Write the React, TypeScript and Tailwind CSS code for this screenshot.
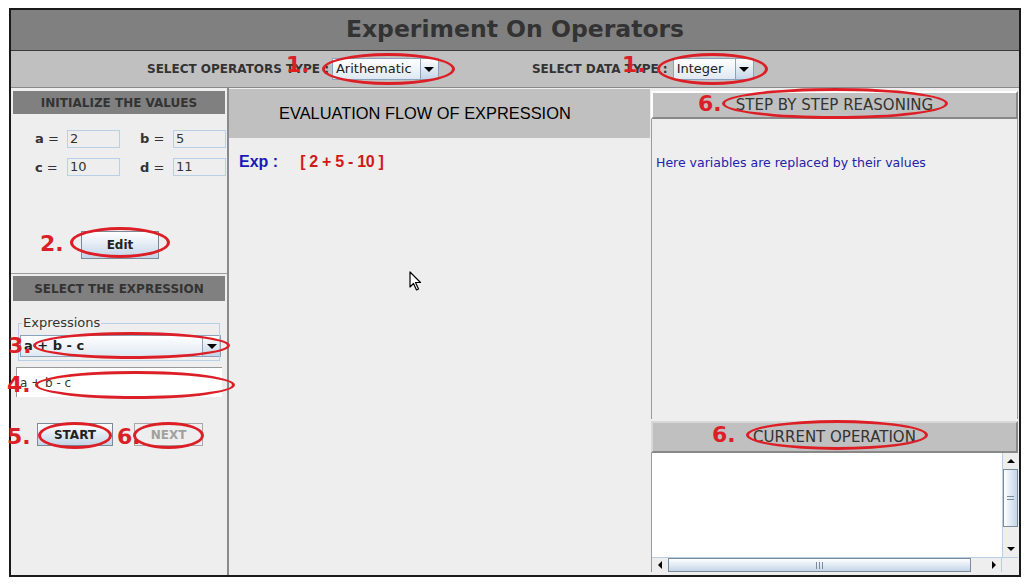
import React from 'react';

function Combo({ label, width, bold }: { label: string; width: string; bold?: boolean }) {
  return (
    <div className={`flex h-[22px] border border-[#8aa2bb] bg-linear-to-b from-white to-[#dfe8f2] ${width}`}>
      <div className={`flex-1 flex items-center pl-[3px] text-[13px] text-[#222] ${bold ? 'font-bold' : ''}`}>{label}</div>
      <div className="w-[18px] flex items-center justify-center border-l border-[#8aa2bb] bg-linear-to-b from-white to-[#c4d5e8]">
        <div className="w-0 h-0 border-l-[5px] border-r-[5px] border-t-[5px] border-l-transparent border-r-transparent border-t-black" />
      </div>
    </div>
  );
}

function Field({ value }: { value: string }) {
  return (
    <div className="w-[53px] h-[18px] border border-[#b8cfe5] bg-[#eeeeee] pl-[2px] text-[13px] leading-[16px] text-[#333]">
      {value}
    </div>
  );
}

export default function App() {
  return (
    <div className="relative w-[1031px] h-[587px] bg-white pl-[9px] pt-[8px] font-['DejaVu_Sans',sans-serif] overflow-hidden">
      <div className="w-[1012px] h-[569px] border-2 border-[#1a1a1a] flex flex-col bg-[#eeeeee]">
        {/* title */}
        <div className="h-[41px] bg-[#808080] border-b border-[#3c3c3c] flex items-center justify-center text-[23.5px] font-bold text-[#333]">
          Experiment On Operators
        </div>

        {/* toolbar */}
        <div className="h-[37px] bg-[#c0c0c0] border-b border-[#8a8a8a] flex items-center pl-[136px]">
          <span className="text-[12px] font-bold text-[#333]">SELECT OPERATORS TYPE :</span>
          <div className="ml-[3px]">
            <Combo label="Arithematic" width="w-[107px]" />
          </div>
          <span className="ml-[93px] text-[12px] font-bold text-[#333]">SELECT DATA TYPE :</span>
          <div className="ml-[5px]">
            <Combo label="Integer" width="w-[81px]" />
          </div>
        </div>

        {/* main */}
        <div className="flex flex-1">
          {/* left column */}
          <div className="w-[218px] border-r-2 border-[#8a8a8a] flex flex-col">
            <div className="h-[186px] border-b border-[#9a9a9a] flex flex-col">
              <div className="mt-[3px] mx-[2px] h-[23px] bg-[#808080] flex items-center justify-center text-[12px] font-bold text-[#333]">
                INITIALIZE THE VALUES
              </div>
              <div className="mt-[15px] flex items-center text-[13px] text-[#333]">
                <span className="w-[56px] pl-[24px]"><b>a</b> =</span>
                <Field value="2" />
                <span className="w-[53px] pl-[20px]"><b>b</b> =</span>
                <Field value="5" />
              </div>
              <div className="mt-[9px] flex items-center text-[13px] text-[#333]">
                <span className="w-[56px] pl-[24px]"><b>c</b> =</span>
                <Field value="10" />
                <span className="w-[53px] pl-[20px]"><b>d</b> =</span>
                <Field value="11" />
              </div>
              <div className="mt-[54px] ml-[70px] w-[78px] h-[28px] border border-[#7a8a99] bg-linear-to-b from-white to-[#c4d5e8] flex items-center justify-center text-[12px] font-bold text-[#222]">
                Edit
              </div>
            </div>
            <div className="flex flex-col flex-1">
              <div className="mt-[2px] mx-[2px] h-[25px] bg-[#808080] flex items-center justify-center text-[12px] font-bold text-[#333]">
                SELECT THE EXPRESSION
              </div>
              <div className="relative mt-[22px] mx-[7px] h-[38px] border border-[#b8cfe5]">
                <span className="absolute left-[3px] -top-[9px] bg-[#eeeeee] px-[1px] text-[13px] leading-[16px] text-[#333]">Expressions</span>
              </div>
              <div className="-mt-[26px] mx-[9px]">
                <Combo label="a + b - c" width="w-[201px]" bold />
              </div>
              <div className="mt-[10px] mx-[5px] h-[30px] bg-white border-t border-l border-[#999] flex items-center pl-[3px] text-[12px] text-[#333]">
                a + b - c
              </div>
              <div className="mt-[26px] flex items-center">
                <div className="ml-[26px] w-[76px] h-[23px] border border-[#7a8a99] bg-linear-to-b from-white to-[#c4d5e8] flex items-center justify-center text-[12px] font-bold text-[#222]">
                  START
                </div>
                <div className="ml-[21px] w-[69px] h-[23px] border border-[#a8a8a8] bg-[#eeeeee] flex items-center justify-center text-[12px] font-bold text-[#a0a0a0]">
                  NEXT
                </div>
              </div>
            </div>
          </div>

          {/* middle column */}
          <div className="w-[421px] flex flex-col">
            <div className="mt-[1px] h-[49px] bg-[#c0c0c0] flex items-center pl-[50px] font-['Liberation_Sans',Arial,sans-serif] text-[16.4px] text-black">
              EVALUATION FLOW OF EXPRESSION
            </div>
            <div className="mt-[15px] flex items-center pl-[10px] font-['Liberation_Sans',Arial,sans-serif] text-[16px] font-bold leading-[18px]">
              <span className="text-[#1a1ab8]">Exp :</span>
              <span className="ml-[22px] text-[#d01818] tracking-[-0.3px]">[ 2 + 5 - 10 ]</span>
            </div>
          </div>

          {/* right column */}
          <div className="flex-1 flex flex-col">
            <div className="mt-[3px] mx-[1px] h-[28px] bg-[#c0c0c0] border-2 border-t-white border-l-white border-r-[#888] border-b-[#888] flex items-center justify-center text-[15px] text-[#333]">
              STEP BY STEP REASONING
            </div>
            <div className="h-[300px] mx-[1px] border-l border-r border-[#9a9a9a] bg-[#eeeeee] pt-[35px] pl-[4px] text-[12.5px] text-[#2222aa]">
              Here variables are replaced by their values
            </div>
            <div className="mt-[2px] mx-[1px] h-[32px] bg-[#c0c0c0] border-2 border-t-[#d8d8d8] border-l-[#d8d8d8] border-r-[#888] border-b-[#888] flex items-center justify-center text-[15px] text-[#333]">
              CURRENT OPERATION
            </div>
            <div className="mx-[1px] h-[119px] bg-white border-l border-[#9a9a9a] flex flex-col">
              <div className="flex flex-1">
                <div className="flex-1" />
                <div className="w-[16px] flex flex-col border-l border-[#b8cfe5] bg-[#eeeeee]">
                  <div className="h-[16px] flex items-center justify-center">
                    <div className="w-0 h-0 border-l-[4px] border-r-[4px] border-b-[4px] border-l-transparent border-r-transparent border-b-black" />
                  </div>
                  <div className="h-[58px] border border-[#7a8a99] bg-linear-to-r from-white to-[#c4d5e8] flex flex-col items-center justify-center gap-[2px]">
                    <div className="w-[7px] h-px bg-[#7a8a99]" />
                    <div className="w-[7px] h-px bg-[#7a8a99]" />
                  </div>
                  <div className="flex-1" />
                  <div className="h-[16px] flex items-center justify-center">
                    <div className="w-0 h-0 border-l-[4px] border-r-[4px] border-t-[4px] border-l-transparent border-r-transparent border-t-black" />
                  </div>
                </div>
              </div>
              <div className="h-[15px] flex border-t border-[#b8cfe5] bg-[#eeeeee]">
                <div className="w-[16px] flex items-center justify-center">
                  <div className="w-0 h-0 border-t-[4px] border-b-[4px] border-r-[4px] border-t-transparent border-b-transparent border-r-black" />
                </div>
                <div className="w-[303px] border border-[#7a8a99] bg-linear-to-b from-white to-[#c4d5e8] flex items-center justify-center gap-[2px]">
                  <div className="w-px h-[7px] bg-[#7a8a99]" />
                  <div className="w-px h-[7px] bg-[#7a8a99]" />
                  <div className="w-px h-[7px] bg-[#7a8a99]" />
                </div>
                <div className="flex-1" />
                <div className="w-[16px] flex items-center justify-center border-r border-[#b8cfe5]">
                  <div className="w-0 h-0 border-t-[4px] border-b-[4px] border-l-[4px] border-t-transparent border-b-transparent border-l-black" />
                </div>
                <div className="w-[16px]" />
              </div>
            </div>
          </div>
        </div>
      </div>

      {/* mouse cursor */}
      <svg className="absolute left-[409px] top-[271px]" width="14" height="20" viewBox="0 0 14 20">
        <path d="M1 1 L1 16 L4.5 12.5 L7.5 19 L9.5 18 L6.5 11.5 L11.5 11.5 Z" fill="white" stroke="black" strokeWidth="1.2" strokeLinejoin="round" />
      </svg>

      {/* red annotations */}
      <div className="absolute left-[322px] top-[53px] w-[133px] h-[32px] rounded-[50%] border-[3px] border-[#dc1f26]" />
      <div className="absolute left-[657px] top-[53px] w-[111px] h-[32px] rounded-[50%] border-[3px] border-[#dc1f26]" />
      <div className="absolute left-[70px] top-[227px] w-[100px] h-[31px] rounded-[50%] border-[3px] border-[#dc1f26]" />
      <div className="absolute left-[33px] top-[332px] w-[197px] h-[27px] rounded-[50%] border-[3px] border-[#dc1f26]" />
      <div className="absolute left-[35px] top-[371px] w-[200px] h-[28px] rounded-[50%] border-[3px] border-[#dc1f26]" />
      <div className="absolute left-[38px] top-[422px] w-[74px] h-[27px] rounded-[50%] border-[3px] border-[#dc1f26]" />
      <div className="absolute left-[133px] top-[422px] w-[71px] h-[27px] rounded-[50%] border-[3px] border-[#dc1f26]" />
      <div className="absolute left-[722px] top-[88px] w-[226px] h-[31px] rounded-[50%] border-[3px] border-[#dc1f26]" />
      <div className="absolute left-[746px] top-[420px] w-[182px] h-[30px] rounded-[50%] border-[3px] border-[#dc1f26]" />

      <span className="absolute left-[286px] top-[54px] text-[22px] leading-none font-bold text-[#dc1f26]">1.</span>
      <span className="absolute left-[622px] top-[54px] text-[22px] leading-none font-bold text-[#dc1f26]">1.</span>
      <span className="absolute left-[40px] top-[233px] text-[22px] leading-none font-bold text-[#dc1f26]">2.</span>
      <span className="absolute left-[8px] top-[335px] text-[22px] leading-none font-bold text-[#dc1f26]">3.</span>
      <span className="absolute left-[7px] top-[374px] text-[22px] leading-none font-bold text-[#dc1f26]">4.</span>
      <span className="absolute left-[7px] top-[426px] text-[22px] leading-none font-bold text-[#dc1f26]">5.</span>
      <span className="absolute left-[117px] top-[426px] text-[22px] leading-none font-bold text-[#dc1f26]">6.</span>
      <span className="absolute left-[698px] top-[93px] text-[22px] leading-none font-bold text-[#dc1f26]">6.</span>
      <span className="absolute left-[712px] top-[424px] text-[22px] leading-none font-bold text-[#dc1f26]">6.</span>
    </div>
  );
}
